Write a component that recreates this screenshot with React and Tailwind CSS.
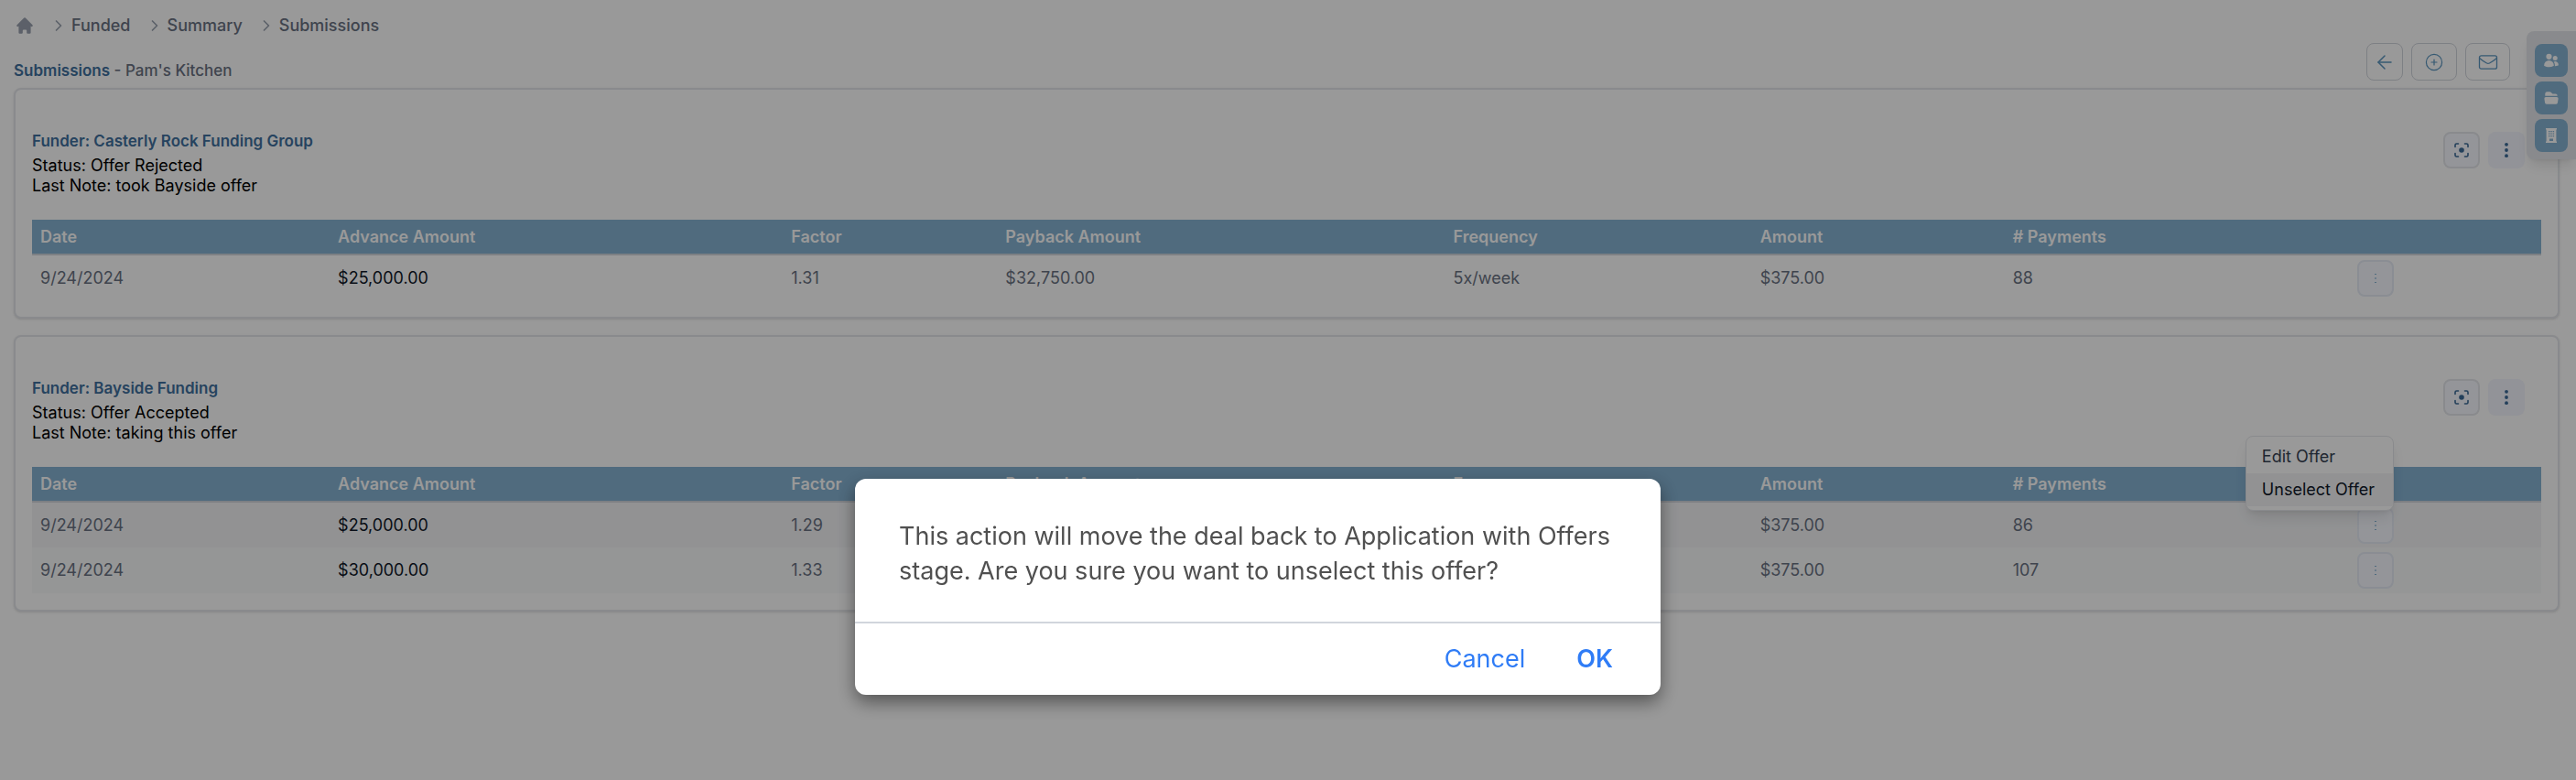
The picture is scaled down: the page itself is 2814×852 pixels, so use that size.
import React from 'react';
import { ArrowLeft, ChevronRight } from 'lucide-react';
import { HiHome } from 'react-icons/hi';
import { HiUsers, HiFolderOpen } from 'react-icons/hi2';

const crumbs = ['Funded', 'Summary', 'Submissions'];

const submissions = [
  {
    id: 1,
    funder: 'Casterly Rock Funding Group',
    status: 'Offer Rejected',
    note: 'took Bayside offer',
    offers: [
      { id: 11, date: '9/24/2024', advance: '$25,000.00', factor: '1.31', payback: '$32,750.00', frequency: '5x/week', amount: '$375.00', payments: '88' },
    ],
  },
  {
    id: 2,
    funder: 'Bayside Funding',
    status: 'Offer Accepted',
    note: 'taking this offer',
    highlighted: true,
    offers: [
      { id: 21, date: '9/24/2024', advance: '$25,000.00', factor: '1.29', amount: '$375.00', payments: '86', menuOpen: true },
      { id: 22, date: '9/24/2024', advance: '$30,000.00', factor: '1.33', amount: '$375.00', payments: '107' },
    ],
  },
];

const FocusIcon = () => (
  <svg width="20" height="20" viewBox="0 0 20 20" fill="none" stroke="currentColor" strokeWidth="1.6" strokeLinecap="round">
    <path d="M3 6.5V4.5C3 3.5 3.5 3 4.5 3h2M13.5 3h2c1 0 1.5.5 1.5 1.5v2M17 13.5v2c0 1-.5 1.5-1.5 1.5h-2M6.5 17h-2C3.5 17 3 16.5 3 15.5v-2" />
    <circle cx="10" cy="10" r="2.8" fill="currentColor" stroke="none" />
  </svg>
);

const DotsIcon = () => (
  <svg width="20" height="20" viewBox="0 0 20 20" fill="currentColor">
    <circle cx="10" cy="3.8" r="1.9" />
    <circle cx="10" cy="10" r="1.9" />
    <circle cx="10" cy="16.2" r="1.9" />
  </svg>
);

const SmallDotsIcon = () => (
  <svg width="12" height="14" viewBox="0 0 12 14" fill="currentColor">
    <rect x="5" y="2" width="2" height="1" />
    <rect x="5" y="6" width="2" height="2" opacity="0.6" />
    <rect x="5" y="11" width="2" height="1" />
  </svg>
);

const PlusCircleIcon = () => (
  <svg width="20" height="20" viewBox="0 0 20 20" fill="none" stroke="currentColor" strokeWidth="1.2" strokeLinecap="round">
    <circle cx="10" cy="10" r="8.6" />
    <path d="M10 7v6M7 10h6" />
  </svg>
);

const EnvelopeIcon = () => (
  <svg width="22" height="18" viewBox="0 0 22 18" fill="none" stroke="currentColor" strokeWidth="1.3" strokeLinejoin="round">
    <rect x="1.5" y="1.8" width="19" height="14.4" rx="2" />
    <path d="M1.5 4.5c3 2.5 6 4.5 8 5.5 1 .5 2 .5 3 0 2-1 5-3 8-5.5" />
  </svg>
);

const BuildingIcon = () => (
  <svg width="18" height="18" viewBox="0 0 18 18">
    <path fill="currentColor" d="M3 1h12v1.5h-.6v13H15V17H3v-1.5h.6v-13H3z" />
    <path fill="#85b2d2" d="M6 4h1.5v1.3H6zM8.3 4h1.5v1.3H8.3zM10.6 4h1.5v1.3h-1.5zM6 6.5h1.5v1.3H6zM8.3 6.5h1.5v1.3H8.3zM10.6 6.5h1.5v1.3h-1.5zM6 9h1.5v1.3H6zM8.3 9h1.5v1.3H8.3zM10.6 9h1.5v1.3h-1.5zM7 12.5h4V15H7z" />
  </svg>
);

const OfferMenu = () => (
  <div role="menu" className="absolute right-0 bottom-9 z-10 w-[162px] py-1 rounded-lg bg-white border border-gray-200 shadow-lg">
    <button role="menuitem" className="block w-full h-9 px-[17px] text-left text-gray-700 whitespace-nowrap">Edit Offer</button>
    <button role="menuitem" className="block w-full h-9 px-[17px] text-left text-gray-900 bg-gray-100 whitespace-nowrap">Unselect Offer</button>
  </div>
);

const OffersTable = ({ offers, highlighted }) => (
  <table className="w-full table-fixed text-left">
    <colgroup>
      <col className="w-[325px]" />
      <col className="w-[495px]" />
      <col className="w-[234px]" />
      <col className="w-[489px]" />
      <col className="w-[335px]" />
      <col className="w-[276px]" />
      <col className="w-[376px]" />
      <col className="w-[210px]" />
    </colgroup>
    <thead>
      <tr className="h-[38px] bg-[#85b2d2] border-b-2 border-gray-300 text-white">
        <th className="pl-[9px] font-semibold">Date</th>
        <th className="pl-[9px] font-semibold">Advance Amount</th>
        <th className="pl-[9px] font-semibold">Factor</th>
        <th className="pl-[9px] font-semibold">Payback Amount</th>
        <th className="pl-[9px] font-semibold">Frequency</th>
        <th className="pl-[9px] font-semibold">Amount</th>
        <th className="pl-[9px] font-semibold"># Payments</th>
        <th aria-label="Actions"></th>
      </tr>
    </thead>
    <tbody className="text-gray-500">
      {offers.map(offer => (
        <tr key={offer.id} className={`h-[50px] ${highlighted ? 'odd:bg-gray-100 even:bg-gray-50' : ''}`}>
          <td className="pl-[9px]">{offer.date}</td>
          <td className="pl-[9px] text-gray-900">{offer.advance}</td>
          <td className="pl-[9px]">{offer.factor}</td>
          <td className="pl-[9px]">{offer.payback}</td>
          <td className="pl-[9px]">{offer.frequency}</td>
          <td className="pl-[9px]">{offer.amount}</td>
          <td className="pl-[9px]">{offer.payments}</td>
          <td className="pl-[9px]">
            <div className="relative w-10">
              <button aria-label="Offer actions" className="flex items-center justify-center size-10 rounded-lg border-2 border-[#e6ebf5] bg-[#f7f9ff] text-[#85b2d2]">
                <SmallDotsIcon />
              </button>
              {offer.menuOpen && <OfferMenu />}
            </div>
          </td>
        </tr>
      ))}
    </tbody>
  </table>
);

const SubmissionCard = ({ submission }) => (
  <section className="rounded-lg border-2 border-gray-200 bg-white shadow-sm px-[18px] pt-[42px] pb-[18px]">
    <div className="flex justify-between mb-[26px]">
      <div className="text-black leading-[22px]">
        <h2 className="mb-[2px] text-[17px] font-semibold text-[#40709e] leading-7">Funder: {submission.funder}</h2>
        <p>Status: {submission.status}</p>
        <p>Last Note: {submission.note}</p>
      </div>
      <div className="flex gap-[9px] pt-1 pr-[18px]">
        <button aria-label="Focus submission" className="flex items-center justify-center size-10 rounded-lg border-2 border-gray-200 bg-[#f7f9ff] text-[#3b6a97]">
          <FocusIcon />
        </button>
        <button aria-label="Submission actions" className="flex items-center justify-center size-10 rounded-lg bg-[#f3f5fd] text-[#3b6a97]">
          <DotsIcon />
        </button>
      </div>
    </div>
    <OffersTable offers={submission.offers} highlighted={submission.highlighted} />
  </section>
);

const SideDock = () => (
  <aside className="fixed right-0 top-[34px] z-20 flex flex-col gap-[5px] w-[54px] pl-[9px] pt-[14px] pb-2 rounded-l-lg bg-gray-200 shadow-lg text-white">
    <button aria-label="Contacts" className="flex items-center justify-center size-9 rounded-lg bg-[#85b2d2]"><HiUsers size={18} /></button>
    <button aria-label="Documents" className="flex items-center justify-center size-9 rounded-lg bg-[#85b2d2]"><HiFolderOpen size={18} /></button>
    <button aria-label="Business" className="flex items-center justify-center size-9 rounded-lg bg-[#85b2d2]"><BuildingIcon /></button>
  </aside>
);

const ConfirmDialog = () => (
  <div className="fixed inset-0 z-30 flex items-start justify-center bg-black/40 pt-[523px] pr-[66px]">
    <div role="alertdialog" aria-modal="true" aria-describedby="confirm-text" className="w-[880px] rounded-xl bg-white shadow-[0_8px_20px_rgba(0,0,0,0.45)]">
      <p id="confirm-text" className="px-12 pt-11 pb-9 text-[27px] leading-[38px] text-[#505050]">
        This action will move the deal back to Application with Offers stage. Are you sure you want to unselect this offer?
      </p>
      <div className="flex items-center justify-end gap-14 h-20 px-[52px] border-t-2 border-gray-300 text-[27px] text-[#2f7cf6]">
        <button>Cancel</button>
        <button className="font-semibold">OK</button>
      </div>
    </div>
  </div>
);

const App = () => {
  return (
    <div className="min-h-screen bg-white font-['Inter',sans-serif] text-[18px] leading-[26px]">
      <nav aria-label="Breadcrumb" className="flex items-center h-14 px-4 text-gray-500 font-medium">
        <a href="#home" aria-label="Home" className="text-gray-400"><HiHome size={22} /></a>
        {crumbs.map(crumb => (
          <span key={crumb} className="flex items-center ml-4">
            <ChevronRight size={20} className="text-gray-400" />
            <a href="#crumb" className="ml-1">{crumb}</a>
          </span>
        ))}
      </nav>

      <header className="flex items-end justify-between h-10 pl-[15px] pr-[72px]">
        <h1 className="pb-[6px] text-[17px] font-medium text-gray-500">
          <span className="text-[#40709e] font-semibold">Submissions</span> - Pam's Kitchen
        </h1>
        <div className="flex gap-[9px] pb-2 text-[#5b95bf]">
          <button aria-label="Back" className="flex items-center justify-center w-10 h-[41px] rounded-lg border border-gray-300"><ArrowLeft size={24} strokeWidth={1.5} /></button>
          <button aria-label="Add" className="flex items-center justify-center w-[50px] h-[41px] rounded-lg border border-gray-300"><PlusCircleIcon /></button>
          <button aria-label="Email" className="flex items-center justify-center w-[49px] h-[41px] rounded-lg border border-gray-300"><EnvelopeIcon /></button>
        </div>
      </header>

      <main className="flex flex-col gap-[18px] pl-[15px] pr-[18px] pb-[18px]">
        {submissions.map(submission => (
          <SubmissionCard key={submission.id} submission={submission} />
        ))}
      </main>

      <SideDock />
      <ConfirmDialog />
    </div>
  );
};

export default App;
